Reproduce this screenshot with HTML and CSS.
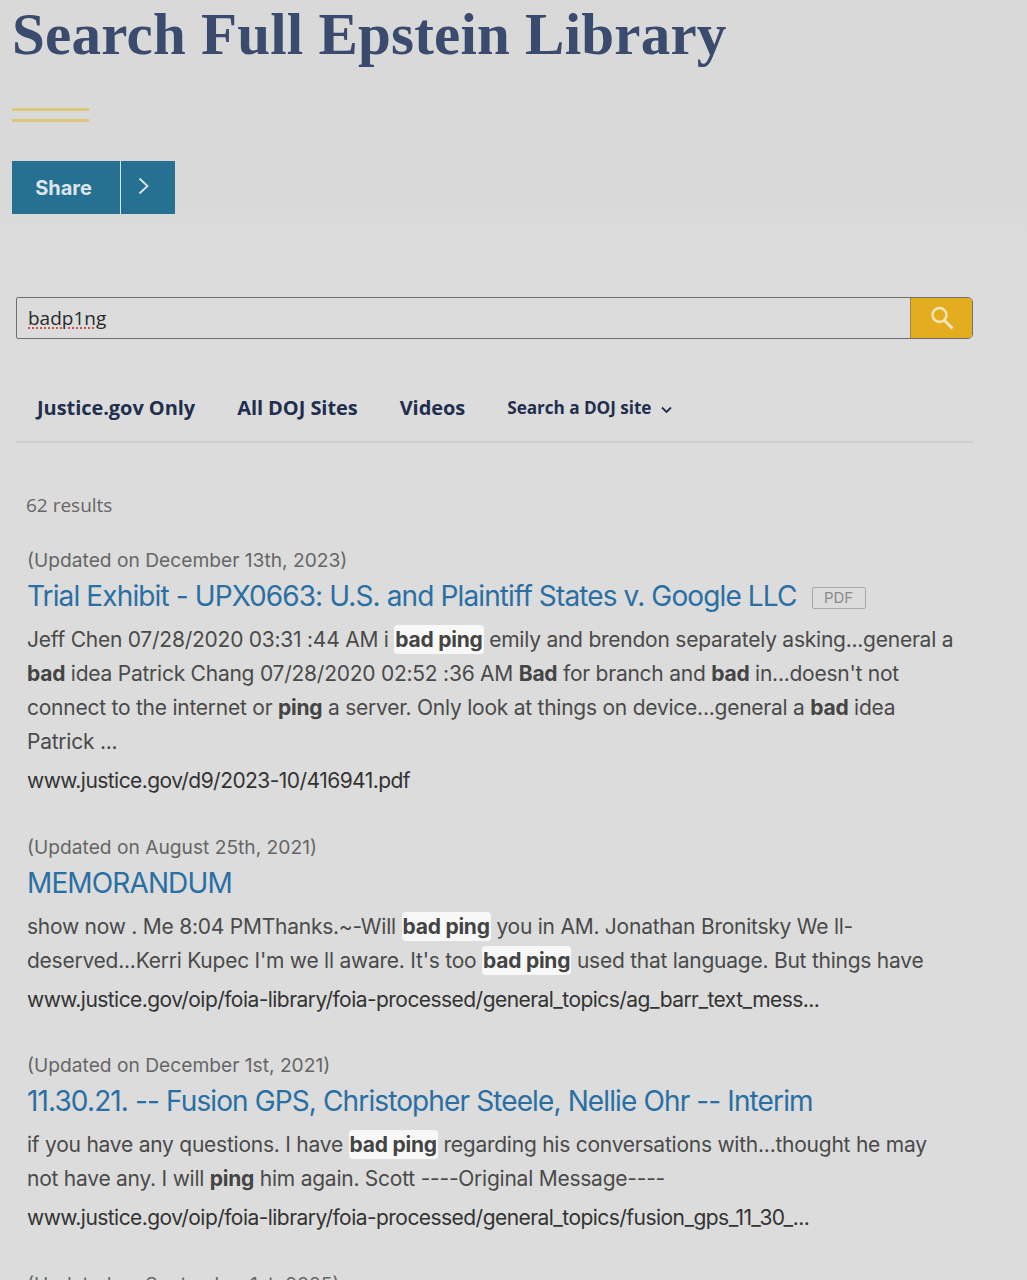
FILE: index.html
```html
<!DOCTYPE html>
<html lang="en">
<head>
  <meta charset="UTF-8">
  <meta name="viewport" content="width=device-width, initial-scale=1.0">
  <title>Search Full Epstein Library</title>
  <link rel="stylesheet" href="styles.css">
</head>
<body>
  <div class="page">
    <header class="hero">
      <h1>Search Full Epstein Library</h1>
      <div class="rule"></div>
      <div class="share">
        <span class="share-label">Share</span>
        <span class="share-arrow">
          <svg width="12" height="18" viewBox="0 0 12 18" fill="none" stroke="#dbe6ec" stroke-width="1.8"><path d="M1.5 1.5l8 7.5-8 7.5"/></svg>
        </span>
      </div>
    </header>

    <main class="search">
      <div class="search-box">
        <div class="search-input"><span class="typo">badp1ng</span></div>
        <button class="search-btn">
          <svg width="26" height="26" viewBox="0 0 26 26" fill="none" stroke="#f6e7bd" stroke-width="2.4"><circle cx="10.5" cy="10" r="7"/><path d="M15.5 15.5l8 8" stroke-width="3"/></svg>
        </button>
      </div>

      <nav class="tabs">
        <a>Justice.gov Only</a>
        <a>All DOJ Sites</a>
        <a>Videos</a>
        <a class="tab-small">Search a DOJ site
          <svg width="11" height="8" viewBox="0 0 11 8" fill="none" stroke="#1f2f4d" stroke-width="1.8"><path d="M1 1.5l4.5 4.5L10 1.5"/></svg>
        </a>
      </nav>

      <div class="count">62 results</div>

      <article class="result">
        <div class="date">(Updated on December 13th, 2023)</div>
        <h2><a>Trial Exhibit - UPX0663: U.S. and Plaintiff States v. Google LLC</a> <span class="pdf">PDF</span></h2>
        <p>Jeff Chen 07/28/2020 03:31 :44 AM i <mark>bad ping</mark> emily and brendon separately asking...general a<br>
        <b>bad</b> idea Patrick Chang 07/28/2020 02:52 :36 AM <b>Bad</b> for branch and <b>bad</b> in...doesn't not<br>
        connect to the internet or <b>ping</b> a server. Only look at things on device...general a <b>bad</b> idea<br>
        Patrick ...</p>
        <div class="url">www.justice.gov/d9/2023-10/416941.pdf</div>
      </article>

      <article class="result">
        <div class="date">(Updated on August 25th, 2021)</div>
        <h2><a>MEMORANDUM</a></h2>
        <p>show now . Me 8:04 PMThanks.~-Will <mark>bad ping</mark> you in AM. Jonathan Bronitsky We ll-<br>
        deserved...Kerri Kupec I'm we ll aware. It's too <mark>bad ping</mark> used that language. But things have</p>
        <div class="url">www.justice.gov/oip/foia-library/foia-processed/general_topics/ag_barr_text_mess...</div>
      </article>

      <article class="result">
        <div class="date">(Updated on December 1st, 2021)</div>
        <h2><a>11.30.21. -- Fusion GPS, Christopher Steele, Nellie Ohr -- Interim</a></h2>
        <p>if you have any questions. I have <mark>bad ping</mark> regarding his conversations with...thought he may<br>
        not have any. I will <b>ping</b> him again. Scott ----Original Message----</p>
        <div class="url">www.justice.gov/oip/foia-library/foia-processed/general_topics/fusion_gps_11_30_...</div>
      </article>

      <article class="result">
        <div class="date">(Updated on September 1st, 2025)</div>
      </article>
    </main>
  </div>
</body>
</html>
```

FILE: styles.css
```css
html, body {
  margin: 0;
  padding: 0;
  height: 1280px;
  overflow: hidden;
  background: #dcdcdc;
}

body {
  font-family: "Inter", "Roboto", sans-serif;
  color: #3f3f3f;
}

.hero {
  background: linear-gradient(#d9d9d9 85%, #dcdcdc);
  height: 240px;
  padding-left: 12px;
  box-sizing: border-box;
}

h1 {
  margin: 0;
  padding-top: 1px;
  font-family: "Liberation Serif", serif;
  font-size: 59px;
  line-height: 66px;
  font-weight: 700;
  color: #3a4b6e;
  letter-spacing: 0.22px;
}

.rule {
  width: 77px;
  height: 8px;
  margin-top: 41px;
  border-top: 3px solid #dcc878;
  border-bottom: 3px solid #dcc878;
}

.share {
  display: flex;
  width: 163px;
  height: 53px;
  margin-top: 39px;
  background: #267092;
  color: #dbe6ec;
}

.share-label {
  width: 109px;
  padding-right: 5px;
  display: flex;
  align-items: center;
  justify-content: center;
  border-right: 1px solid #dbe6ec;
  box-sizing: border-box;
  font-family: "Inter", sans-serif;
  font-weight: 700;
  font-size: 20px;
}

.share-arrow {
  flex: 1;
  display: flex;
  align-items: center;
  padding-left: 17px;
  padding-bottom: 3px;
  box-sizing: border-box;
}

.search {
  padding: 57px 54px 0 16px;
}

.search-box {
  display: flex;
  height: 42px;
  border: 1px solid #6f6f6f;
  border-radius: 2px 5px 5px 2px;
  box-sizing: border-box;
}

.search-input {
  flex: 1;
  padding-left: 11px;
  font-family: "Open Sans", sans-serif;
  font-size: 19px;
  line-height: 41px;
  color: #2a2a2a;
}

.typo {
  text-decoration: underline dotted #c0504d;
  text-underline-offset: 3px;
}

.search-btn {
  width: 62px;
  padding: 0;
  border: none;
  border-left: 1px solid #9a8a40;
  border-radius: 0 4px 4px 0;
  background: #e3ad1f;
  display: flex;
  align-items: center;
  justify-content: center;
}

.tabs {
  display: flex;
  align-items: center;
  gap: 42px;
  height: 104px;
  padding: 35px 0 0 21px;
  box-sizing: border-box;
  border-bottom: 2px solid #d0d0d0;
  font-family: "Open Sans", sans-serif;
  font-weight: 700;
  font-size: 20px;
  letter-spacing: -0.06px;
  color: #1f2f4d;
}

.tab-small {
  font-size: 17.2px;
}

.tab-small svg {
  margin-left: 5px;
}

.count {
  margin: 49px 0 0 10px;
  font-family: "Open Sans", sans-serif;
  font-size: 19px;
  line-height: 26px;
  color: #666;
}

.result {
  margin: 0 0 0 11px;
  padding-bottom: 38.5px;
}

.count + .result {
  margin-top: 29px;
}

.date {
  font-size: 19.2px;
  line-height: 26px;
  color: #666;
  letter-spacing: 0;
}

h2 {
  margin: 5px 0 0;
  font-size: 28px;
  line-height: 36px;
  font-weight: 400;
  color: #2a6fa3;
  letter-spacing: -0.88px;
}

.pdf {
  display: inline-block;
  vertical-align: 3px;
  width: 52px;
  height: 20px;
  margin-left: 8px;
  border: 1px solid #a9a9a9;
  border-radius: 2px;
  font-size: 15px;
  line-height: 20px;
  text-align: center;
  color: #8a8a8a;
  letter-spacing: 0;
}

p {
  margin: 9px 0 0;
  font-size: 21px;
  line-height: 34px;
  color: #4a4a4a;
  letter-spacing: -0.24px;
}

mark {
  background: #f8f8f8;
  color: #444;
  font-weight: 700;
  border-radius: 4px;
  padding: 2px 1px;
}

b {
  font-weight: 700;
  color: #444;
}

.url {
  margin-top: 8px;
  font-size: 21px;
  line-height: 28px;
  color: #333;
  letter-spacing: -0.55px;
}
```
